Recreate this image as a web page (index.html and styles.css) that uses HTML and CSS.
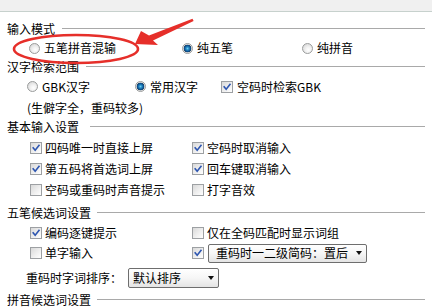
FILE: index.html
```html
<!DOCTYPE html>
<html lang="zh-CN">
<head>
<meta charset="utf-8">
<title>输入模式设置</title>
<link rel="stylesheet" href="styles.css">
</head>
<body>
<div class="top"></div>
<div class="panel">
  <div class="gtitle g1"><span>输入模式</span><i class="rule"></i></div>
  <div class="row mode">
    <label class="opt"><span class="radio"></span>五笔拼音混输</label>
    <label class="opt"><span class="radio on"></span>纯五笔</label>
    <label class="opt"><span class="radio"></span>纯拼音</label>
  </div>

  <div class="gtitle g2"><span>汉字检索范围</span><i class="rule"></i></div>
  <div class="row scope">
    <label class="opt"><span class="radio"></span>GBK汉字</label>
    <label class="opt"><span class="radio on"></span>常用汉字</label>
    <label class="opt cbopt"><span class="cb on"><svg viewBox="0 0 12 12"><path d="M2.6 5.8 L5 8.6 L9.6 2.8"/></svg></span>空码时检索GBK</label>
  </div>
  <div class="note">(生僻字全，重码较多)</div>

  <div class="gtitle g3"><span>基本输入设置</span><i class="rule"></i></div>
  <div class="grid basic">
    <label class="opt"><span class="cb on"><svg viewBox="0 0 12 12"><path d="M2.6 5.8 L5 8.6 L9.6 2.8"/></svg></span>四码唯一时直接上屏</label>
    <label class="opt"><span class="cb on"><svg viewBox="0 0 12 12"><path d="M2.6 5.8 L5 8.6 L9.6 2.8"/></svg></span>空码时取消输入</label>
    <label class="opt"><span class="cb on"><svg viewBox="0 0 12 12"><path d="M2.6 5.8 L5 8.6 L9.6 2.8"/></svg></span>第五码将首选词上屏</label>
    <label class="opt"><span class="cb on"><svg viewBox="0 0 12 12"><path d="M2.6 5.8 L5 8.6 L9.6 2.8"/></svg></span>回车键取消输入</label>
    <label class="opt"><span class="cb"></span>空码或重码时声音提示</label>
    <label class="opt"><span class="cb"></span>打字音效</label>
  </div>

  <div class="gtitle g4"><span>五笔候选词设置</span><i class="rule"></i></div>
  <div class="grid wubi">
    <label class="opt"><span class="cb on"><svg viewBox="0 0 12 12"><path d="M2.6 5.8 L5 8.6 L9.6 2.8"/></svg></span>编码逐键提示</label>
    <label class="opt"><span class="cb"></span>仅在全码匹配时显示词组</label>
    <label class="opt"><span class="cb"></span>单字输入</label>
    <div class="opt"><span class="cb on"><svg viewBox="0 0 12 12"><path d="M2.6 5.8 L5 8.6 L9.6 2.8"/></svg></span><span class="select wide"><span class="stext">重码时一二级简码：置后</span><span class="arrow"></span></span></div>
  </div>
  <div class="row sort">
    <span class="label">重码时字词排序：</span>
    <span class="select narrow"><span class="stext">默认排序</span><span class="arrow"></span></span>
  </div>

  <div class="gtitle g5"><span>拼音候选词设置</span><i class="rule"></i></div>
</div>

<svg class="annot" width="432" height="307" viewBox="0 0 432 307">
  <ellipse cx="76" cy="49" rx="62" ry="14" fill="none" stroke="#e62f2a" stroke-width="2.6"/>
  <polygon fill="#e62f2a" points="135,44 141,31 149,35.5 192.5,18.8 193.6,21 153,40.5 158,45"/>
</svg>
</body>
</html>
```

FILE: styles.css
```css
html, body {
  margin: 0;
  padding: 0;
}
body {
  width: 432px;
  height: 307px;
  overflow: hidden;
  position: relative;
  background: #ffffff;
  font-family: "Noto Sans CJK SC", "Noto Sans", sans-serif;
  font-size: 12px;
  line-height: 1;
  color: #000;
}
.top {
  height: 11px;
  background: #f0f0f0;
  border-bottom: 1px solid #c7d1cd;
}
.panel {
  padding: 7px 7px 0 7px;
}
.gtitle {
  display: flex;
  align-items: center;
  height: 20px;
}
.gtitle span {
  white-space: nowrap;
}
.gtitle .rule {
  flex: 1;
  height: 0;
  border-top: 1px solid #a9a9a9;
  margin-left: 7px;
  margin-top: -1px;
}
.g3 .rule { margin-left: 11px; }
.g4 .rule, .g5 .rule { margin-left: 6px; }

.row {
  display: flex;
  align-items: center;
}
.opt {
  display: flex;
  align-items: center;
  white-space: nowrap;
}

.radio {
  width: 11px;
  height: 11px;
  box-sizing: border-box;
  border-radius: 50%;
  border: 1px solid #9a9c9c;
  background: radial-gradient(circle at 60% 65%, #ffffff 0, #f2f2f2 35%, #cfcfcf 100%);
  margin-right: 4px;
  flex: none;
}
.radio.on {
  background: radial-gradient(circle at 50% 50%, #6fd0f0 0, #2a8fc8 1.4px, #0b4f8f 3px, #1f4c70 3.6px, #d8d8d8 4.1px, #f4f4f4 5px);
}

.cb {
  width: 12px;
  height: 12px;
  box-sizing: border-box;
  border: 1px solid #9da0a3;
  background: linear-gradient(135deg, #d9d9d9 0%, #efefef 55%, #ffffff 100%);
  margin-right: 3px;
  flex: none;
  display: flex;
}
.cb svg {
  width: 10px;
  height: 10px;
}
.cb svg path {
  fill: none;
  stroke: #2e56b0;
  stroke-width: 1.9;
  stroke-linecap: square;
}

.mode {
  height: 18px;
  padding-left: 22px;
}
.mode .opt:nth-child(1) { width: 153px; }
.mode .opt:nth-child(2) { width: 120px; }

.g2 { height: 20px; }
.scope {
  height: 19px;
  padding-left: 20px;
}
.scope .opt:nth-child(1) { width: 108px; }
.scope .opt:nth-child(2) { width: 86px; }
.scope .cbopt .cb { margin-right: 4px; }

.note {
  height: 21px;
  display: flex;
  align-items: center;
  padding-left: 20px;
  padding-top: 2px;
  box-sizing: border-box;
}

.grid {
  display: grid;
  grid-template-columns: 162px auto;
  padding-left: 23px;
}
.basic {
  grid-auto-rows: 21px;
}
.basic .opt, .wubi .opt {
  height: 100%;
}
.g4 { margin-top: 3px; }
.wubi {
  grid-auto-rows: 20px;
}

.select {
  display: flex;
  align-items: center;
  box-sizing: border-box;
  border: 1px solid #6e6e6e;
  border-radius: 2px;
  background: linear-gradient(#ffffff 0%, #f6f6f6 50%, #e4e4e4 100%);
}
.select .stext {
  flex: 1;
  padding-left: 4px;
  white-space: nowrap;
}
.select .arrow {
  width: 0;
  height: 0;
  border-left: 3.5px solid transparent;
  border-right: 3.5px solid transparent;
  border-top: 4px solid #111;
  margin-right: 4px;
}
.wide {
  width: 159px;
  height: 19px;
  margin-left: 1px;
}
.wide .stext { padding-left: 7px; }

.sort {
  height: 24px;
  margin-top: 3px;
  padding-left: 19px;
}
.sort .label {
  width: 102px;
  white-space: nowrap;
}
.narrow {
  width: 91px;
  height: 20px;
}

.g5 { height: 19px; }

.annot {
  position: absolute;
  left: 0;
  top: 0;
  pointer-events: none;
}
```
